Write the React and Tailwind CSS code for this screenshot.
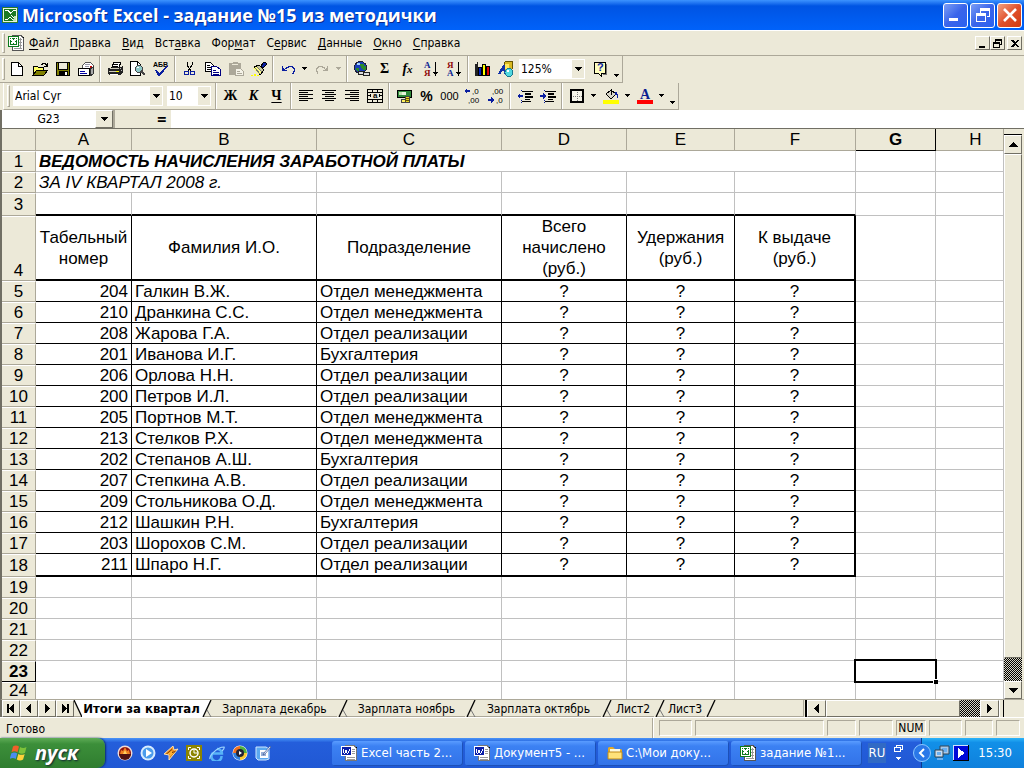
import { clsx } from 'clsx';

const rows = [
  ['204', 'Галкин В.Ж.', 'Отдел менеджмента'],
  ['210', 'Дранкина С.С.', 'Отдел менеджмента'],
  ['208', 'Жарова Г.А.', 'Отдел реализации'],
  ['201', 'Иванова И.Г.', 'Бухгалтерия'],
  ['206', 'Орлова Н.Н.', 'Отдел реализации'],
  ['200', 'Петров И.Л.', 'Отдел реализации'],
  ['205', 'Портнов М.Т.', 'Отдел менеджмента'],
  ['213', 'Стелков Р.Х.', 'Отдел менеджмента'],
  ['202', 'Степанов А.Ш.', 'Бухгалтерия'],
  ['207', 'Степкина А.В.', 'Отдел реализации'],
  ['209', 'Стольникова О.Д.', 'Отдел менеджмента'],
  ['212', 'Шашкин Р.Н.', 'Бухгалтерия'],
  ['203', 'Шорохов С.М.', 'Отдел реализации'],
  ['211', 'Шпаро Н.Г.', 'Отдел реализации'],
];

const menu = [
  ['', 'Ф', 'айл'],
  ['', 'П', 'равка'],
  ['', 'В', 'ид'],
  ['Вст', 'а', 'вка'],
  ['Фор', 'м', 'ат'],
  ['С', 'е', 'рвис'],
  ['', 'Д', 'анные'],
  ['', 'О', 'кно'],
  ['', 'С', 'правка'],
];

const raised = 'border border-t-white border-l-white border-r-[#716f64] border-b-[#716f64] bg-[#ece9d8]';

/* ---------- icons ---------- */

function Svg({ children, w = 16, h = 16, smooth = false, className }) {
  return (
    <svg
      width={w}
      height={h}
      viewBox={`0 0 ${w} ${h}`}
      shapeRendering={smooth ? 'auto' : 'crispEdges'}
      className={clsx('block shrink-0', className)}
      aria-hidden="true"
    >
      {children}
    </svg>
  );
}

const Down = ({ color = '#000', w = 7 }) => (
  <Svg w={w} h={4}>
    {w === 7 ? (
      <path d="M0 0h7v1H0zM1 1h5v1H1zM2 2h3v1H2zM3 3h1v1H3z" fill={color} />
    ) : (
      <path d="M0 0h5v1H0zM1 1h3v1H1zM2 2h1v1H2z" fill={color} />
    )}
  </Svg>
);

const ExcelMark = () => (
  <Svg>
    <rect width="16" height="16" fill="#2f7d2f" />
    <rect x="1" y="1" width="14" height="14" fill="#e8f5dc" />
    <rect x="2" y="2" width="12" height="12" fill="#1d7a24" />
    <path d="M3 3h4l2 3 2-3h3L10 8l4 5h-4l-2-3-2 3H3l4-5z" fill="#fff" />
    <path d="M4 4h2l6 8h-2zM11 4h2L6 12H4z" fill="#1d7a24" />
    <path d="M12 9h2v5h-3v-2h1z" fill="#bfe0b0" />
  </Svg>
);

const ExcelDoc = () => (
  <Svg w={17} h={17}>
    <path d="M7 1h7l2 2v13H5V1z" fill="#000" />
    <path d="M6 0h7l2 3v12H4V0z" fill="#fff" stroke="#555" />
    <path d="M11 4h3M11 7h3M11 10h3M6 13h8M12 3v10" stroke="#999" />
    <rect x="0" y="1" width="11" height="11" fill="#0c7a1c" />
    <rect x="1" y="2" width="9" height="9" fill="#fff" />
    <rect x="2" y="3" width="7" height="7" fill="#0c7a1c" />
    <path d="M3 4l5 5M8 4L3 9" stroke="#fff" strokeWidth="1.500" />
  </Svg>
);

const WordDoc = () => (
  <Svg w={17} h={17}>
    <path d="M7 1h7l2 2v13H5V1z" fill="#000" />
    <path d="M6 0h7l2 3v12H4V0z" fill="#fff" stroke="#777" />
    <path d="M11 4h3M11 6h3M11 8h3M6 12h8M6 14h8" stroke="#999" />
    <rect x="0" y="1" width="11" height="10" fill="#fff" />
    <rect x="1" y="2" width="9" height="8" fill="#0a1ea8" />
    <path d="M2 4l1 4h1l1-3 1 3h1l2-4" stroke="#fff" fill="none" />
  </Svg>
);

const NewIcon = () => (
  <Svg>
    <path d="M2.500 1.500h7l4 4v9h-11z" fill="#fff" stroke="#000" />
    <path d="M9.500 1.500v4h4" fill="none" stroke="#000" />
  </Svg>
);

const OpenIcon = () => (
  <Svg>
    <path d="M1 5h4l1 1h5v3H5l-4 5z" fill="#ffff66" stroke="#000" />
    <path d="M5 9h11l-4 5H1z" fill="#808000" stroke="#000" />
    <path d="M9 3h1V2h3v1h1v1h1M15 2v3h-3" fill="none" stroke="#000" />
  </Svg>
);

const SaveIcon = () => (
  <Svg>
    <rect x="1" y="1" width="14" height="14" fill="#000" />
    <rect x="2" y="2" width="12" height="12" fill="#808000" />
    <rect x="3" y="1" width="10" height="8" fill="#000" />
    <rect x="4" y="2" width="8" height="6" fill="#ece9d8" />
    <rect x="4" y="10" width="9" height="5" fill="#000" />
    <rect x="10" y="11" width="2" height="3" fill="#fff" />
  </Svg>
);

const MailIcon = () => (
  <Svg>
    <path d="M4.500 7V4.500l3-3h5l3 3V11.500h-6" fill="#fff" stroke="#555" />
    <path d="M7 3h5M7 5h4" stroke="#99a" />
    <rect x="12" y="5" width="2" height="2" fill="#c00" />
    <rect x="0.500" y="7.500" width="11" height="7" fill="#fff" stroke="#000" />
    <path d="M2 10h5M2 12h7" stroke="#0000a0" />
    <path d="M12 8l3-2v7l-3 2z" fill="#aaa" stroke="#333" />
  </Svg>
);

const PrintIcon = () => (
  <Svg>
    <path d="M5 6l2-5h7l-2 5z" fill="#fff" stroke="#000" />
    <path d="M7 3h4M6 5h5" stroke="#000" />
    <path d="M1 7h3l1-1h8l3-1v6l-3 3H2l-1-2z" fill="#222" />
    <path d="M3 7h9v1H3zM2 10h10v1H2z" fill="#d0cdbc" />
    <rect x="9" y="10" width="3" height="1" fill="#ff0" />
    <path d="M3 13h8v1H3z" fill="#fff" />
    <path d="M13 7h1v1h-1zM14 9h1v1h-1z" fill="#bbb" />
  </Svg>
);

const PreviewIcon = () => (
  <Svg>
    <path d="M0.500 0.500h7l3 3v11h-10z" fill="#fff" stroke="#000" />
    <path d="M7.500 1v3h3" fill="none" stroke="#000" />
    <circle cx="9" cy="8" r="3.500" fill="#8fc8c8" stroke="#444" />
    <path d="M11 10l4 4" stroke="#444" strokeWidth="2" />
    <path d="M7 6h2v1H7z" fill="#fff" />
  </Svg>
);

const SpellIcon = () => (
  <Svg>
    <text x="0" y="6" fontSize="7" fontWeight="700" fontFamily="Liberation Sans, sans-serif">АБВ</text>
    <path d="M2 9h2l2 3 7-7h2L7 15H5z" fill="#0a1ea0" />
  </Svg>
);

const CutIcon = () => (
  <Svg>
    <path d="M5 1v3l4 6M10 1v3l-4 6" stroke="#000" fill="none" />
    <circle cx="4.500" cy="12" r="2" fill="none" stroke="#0a1ea0" />
    <circle cx="10.500" cy="12" r="2" fill="none" stroke="#0a1ea0" />
  </Svg>
);

const CopyIcon = () => (
  <Svg>
    <path d="M0.500 1.500h5l3 3v6h-8z" fill="#fff" stroke="#000" />
    <path d="M2 4h3M2 6h4M2 8h4" stroke="#000" />
    <path d="M6.500 5.500h5l4 3v6h-9z" fill="#fff" stroke="#000080" />
    <path d="M8 9h3M8 11h6M8 13h6" stroke="#000080" />
  </Svg>
);

const PasteIcon = () => (
  <Svg>
    <path d="M1 2h3l1-1h4l1 1h3v12H1z" fill="#aca899" />
    <path d="M4 3h6v1H4z" fill="#ece9d8" />
    <path d="M7.500 7.500h5l3 3v4h-8z" fill="#f5f3e8" stroke="#aca899" />
    <path d="M9 10h3M9 12h5" stroke="#aca899" />
  </Svg>
);

const BrushIcon = () => (
  <Svg>
    <path d="M10 5l3-4 2 1v2l-3 3z" fill="#0a1ea0" stroke="#000" />
    <path d="M3 6l5-2 5 5-4 5z" fill="#c8c8a0" stroke="#000" />
    <path d="M2 7l3-1 5 5-2 3z" fill="#ffff80" />
    <path d="M4 7l5 6M6 6l5 5" stroke="#777" />
    <path d="M0 14h2v1H0zM3 13h2v2H3zM6 14h2v1H6z" fill="#ff0" />
  </Svg>
);

const Undo = ({ color }) => (
  <Svg>
    <path d="M2 5h1v2h1v1h1v1h2v1H2z" fill={color} />
    <path d="M5 7h1V6h2V5h4v1h1v1h1v3h-1v2h-1" fill="none" stroke={color} />
  </Svg>
);

const WebIcon = () => (
  <Svg>
    <circle cx="6.500" cy="6.500" r="6" fill="#1a3fb8" stroke="#223" />
    <path d="M6 3h4v2h2v4H9L7 7zM2 7h3v3H3z" fill="#2a8a2a" />
    <path d="M3 2h3v2H3z" fill="#a8d4ff" />
    <rect x="4.500" y="10.500" width="6" height="3" rx="1" fill="#ddd" stroke="#222" />
    <rect x="9.500" y="11.500" width="6" height="3" rx="1" fill="#ddd" stroke="#222" />
  </Svg>
);

const Sort = ({ top, bottom, topColor, bottomColor }) => (
  <Svg>
    <g fontSize="9" fontWeight="700" fontFamily="Liberation Serif, serif">
      <text x="1" y="7" fill={topColor}>{top}</text>
      <text x="1" y="15" fill={bottomColor}>{bottom}</text>
    </g>
    <path d="M12 1h1v10h2v1h-1v1h-1v2h-1v-2h-1v-1h-1v-1h2z" />
  </Svg>
);

const ChartIcon = () => (
  <Svg>
    <path d="M0 3h2V1h1v12h12v2H0z" fill="#222" />
    <path d="M3 6h3v8H3z" fill="#0020c0" stroke="#000" />
    <path d="M7 3h3v11H7z" fill="#ff0" stroke="#000" />
    <path d="M11 5h3v9h-3z" fill="#e00000" stroke="#000" />
  </Svg>
);

const DrawIcon = () => (
  <Svg>
    <path d="M6 2l2-2h6v8l-2 2H6z" fill="#d8b820" stroke="#665500" />
    <path d="M7 3h4v5H7z" fill="#ffe860" />
    <path d="M0 13L5 4h2l1 9H6v-3H4l-1 3z" fill="#1030a8" />
    <circle cx="11" cy="11.500" r="4" fill="#50d8e0" stroke="#187890" />
    <path d="M9 9h2v2H9z" fill="#fff" />
  </Svg>
);

const HelpIcon = () => (
  <Svg>
    <path d="M2 1h11v11H9v3l-3-3H2z" fill="#ffffc0" stroke="#000" />
    <text x="5" y="10" fontSize="11" fontWeight="700" fill="#0a1ea0" fontFamily="Liberation Sans, sans-serif">?</text>
    <path d="M14.500 3v10h-4" fill="none" stroke="#777" />
  </Svg>
);

const Align = ({ mode }) => (
  <Svg>
    {[0, 1, 2, 3, 4, 5].map((i) => {
      const w = i % 2 ? 9 : 14;
      const x = mode === 'left' ? 1 : mode === 'right' ? 15 - w : 8 - Math.floor(w / 2);
      return <rect key={i} x={x} y={2 + i * 2} width={w} height="1" />;
    })}
  </Svg>
);

const MergeIcon = () => (
  <Svg>
    <path d="M0.500 1.500h15v13h-15z" fill="none" stroke="#000" />
    <path d="M0 4h16v1H0zM0 11h16v1H0zM5 1h1v3H5zM10 1h1v3h-1zM5 12h1v3H5zM10 12h1v3h-1z" />
    <path d="M1 7h3v1H1zM12 7h3v1h-3zM3 6h1v3H3zM12 6h1v3h-1z" />
    <text x="6" y="10" fontSize="8" fontWeight="700" fontFamily="Liberation Sans, sans-serif">a</text>
  </Svg>
);

const MoneyIcon = () => (
  <Svg>
    <path d="M1 2h14v7H1z" fill="#2f8a3a" stroke="#000" />
    <path d="M3 4h3v3H3z" fill="#bfe0b0" />
    <circle cx="8" cy="5.500" r="2" fill="#e8f5dc" />
    <path d="M9 8h4v6H9z" fill="#e8d820" stroke="#444" />
    <path d="M5 11h4v3H5z" fill="#fff060" stroke="#444" />
    <path d="M9 10h4M9 12h4" stroke="#665500" />
  </Svg>
);

const Digits = ({ inc }) => (
  <Svg w={17} h={18}>
    <g fontSize="8" fontFamily="Liberation Sans, sans-serif">
      <text x={inc ? 8 : 5} y="7">{inc ? ',0' : ',00'}</text>
      <text x={inc ? 4 : 9} y="16">{inc ? ',00' : ',0'}</text>
    </g>
    {inc ? (
      <path d="M0 4l3-3v2h3v2H3v2z" fill="#0a1ea0" />
    ) : (
      <path d="M7 13l-3-3v2H1v2h3v2z" fill="#0a1ea0" />
    )}
  </Svg>
);

const Indent = ({ out }) => (
  <Svg>
    <path d="M5 3h11v1H5zM8 5h6v2H8zM8 8h8v2H8zM8 11h5v1H8zM5 13h9v1H5z" />
    {out ? (
      <path d="M0 8l3-3v2h3v2H3v2z" fill="#0a1ea0" />
    ) : (
      <path d="M6 8L3 5v2H0v2h3v2z" fill="#0a1ea0" />
    )}
    <path d="M4 2v2M4 12v3" stroke="#0a1ea0" strokeDasharray="1 1" />
  </Svg>
);

const BorderIcon = () => (
  <Svg>
    <rect x="2" y="2" width="12" height="12" fill="#f5f3e8" stroke="#000" strokeWidth="2" />
    <path d="M8.500 4v9M4 8.500h9" stroke="#777" strokeDasharray="1 1" />
  </Svg>
);

const FillIcon = () => (
  <Svg>
    <path d="M3 6l5-4 5 4-5 5z" fill="#d8d6c8" stroke="#000" />
    <path d="M8 1v6" stroke="#000" />
    <path d="M12 4h2v2h1v4h-1V7h-2z" fill="#0a1ea0" />
    <rect y="12" width="16" height="4" fill="#ff0" />
  </Svg>
);

const FontColorIcon = () => (
  <Svg h={20}>
    <text x="3" y="13" fontSize="14" fontWeight="700" fill="#0a1e90" fontFamily="Liberation Serif, serif">A</text>
    <rect y="14" width="16" height="4" fill="#f00" />
  </Svg>
);

const WindowsFlag = () => (
  <Svg w={18} h={18} smooth>
    <path d="M3 2.500c2-1.400 4-1.200 6 0L7.500 8.200c-2-1.200-4-1.300-6 0z" fill="#f0602a" />
    <path d="M10 3c2 1.200 4.300 1.300 6.500 0L15 8.800c-2.200 1.300-4.300 1.100-6.400 0z" fill="#7dc23a" />
    <path d="M1.200 9.400c2-1.300 4-1.200 6 0L5.700 15c-2-1.200-4-1.200-6 0z" fill="#4a8cf0" />
    <path d="M8.300 9.900c2 1.200 4.200 1.300 6.400 0l-1.600 5.700c-2.100 1.200-4.200 1.200-6.300 0z" fill="#ffd23a" />
  </Svg>
);

const quickIcons = [
  {
    label: 'Nero',
    art: (
      <>
        <circle cx="8" cy="8" r="7.500" fill="#f0dcd8" />
        <circle cx="8" cy="8" r="6" fill="#8c1010" />
        <path d="M3 9l1-4 2 1 2-4 2 4 2-1 1 4z" fill="#f08020" />
        <path d="M6 9l2-4 2 4z" fill="#ffd060" />
        <path d="M2 9h12a6 6 0 01-12 0z" fill="#501010" />
      </>
    ),
  },
  {
    label: 'Media',
    art: (
      <>
        <circle cx="8" cy="8" r="7.500" fill="#d8ecff" />
        <circle cx="8" cy="8" r="5.500" fill="#4a9cec" />
        <path d="M6 4l6 4-6 4z" fill="#fff" />
      </>
    ),
  },
  {
    label: 'Winamp',
    art: (
      <>
        <path d="M1 9l9-8 1 4 4-1-9 11v-5z" fill="#f09020" stroke="#fbe0b0" />
        <path d="M3 9l6-5v3l4-1-6 6V9z" fill="#703000" />
        <path d="M4 9l5-4v3l3-1-5 5V9z" fill="#ffb030" />
      </>
    ),
  },
  {
    label: 'Outlook',
    art: (
      <>
        <rect width="16" height="16" fill="#8c8400" />
        <path d="M5 2.500H2.500V5M11 2.500h2.500V5M5 13.500H2.500V11M11 13.500h2.500V11" fill="none" stroke="#fff" />
        <circle cx="8" cy="8" r="4" fill="#8c8400" stroke="#fff" strokeWidth="1.500" />
        <path d="M8 5v3h3" fill="none" stroke="#fff" />
      </>
    ),
  },
  {
    label: 'Internet Explorer',
    art: (
      <>
        <path d="M12.500 11A5 5 0 113.500 8.500H13A4.700 4.700 0 008 4" fill="none" stroke="#58b4f8" strokeWidth="2.500" />
        <path d="M1 14C0 11 8 2 15 2c1 1-1 3-2 4" fill="none" stroke="#9cd4ff" strokeWidth="1.200" />
      </>
    ),
  },
  {
    label: 'Media Player',
    art: (
      <>
        <circle cx="8" cy="8" r="7.500" fill="#fff" />
        <path d="M8 1a7 7 0 00-7 7h4l3-3z" fill="#f07020" />
        <path d="M8 1a7 7 0 017 7h-4L8 5z" fill="#50b040" />
        <path d="M1 8a7 7 0 007 7v-3L5 8z" fill="#3080e0" />
        <path d="M15 8a7 7 0 01-7 7v-3l3-4z" fill="#f8c830" />
        <circle cx="8" cy="8" r="4" fill="#223" />
        <path d="M7 6l3 2-3 2z" fill="#fff" />
      </>
    ),
  },
  {
    label: 'Рабочий стол',
    art: (
      <>
        <path d="M1 2h10l3 2v10l-3 1H3l-2-2z" fill="#5aa8f0" stroke="#cfe6ff" />
        <path d="M5 5h8v8H5z" fill="#fff" />
        <path d="M6 8h4M6 10h5" stroke="#3060b0" />
        <path d="M15 1L9 8l-1 2 2-1 6-7z" fill="#f8f8ff" stroke="#305090" strokeWidth=".7" />
      </>
    ),
  },
];

const FolderIcon = () => (
  <Svg smooth>
    <path d="M1 3l1-1h4l2 2h6l1 1v9H1z" fill="#e0a828" />
    <path d="M3 4h10v3H3z" fill="#fffbe0" />
    <path d="M1 7h14v7H1z" fill="#ffe27a" stroke="#c08a18" />
  </Svg>
);

/* ---------- small controls ---------- */

const Sep = () => (
  <span className="flex w-[6px] shrink-0 justify-center self-stretch">
    <span className="h-full border-r border-l border-r-white border-l-[#aca899]" />
  </span>
);

const Grip = () => (
  <span className="my-[2px] w-[3px] shrink-0 self-stretch border border-t-white border-r-[#aca899] border-b-[#aca899] border-l-white" />
);

const Tool = ({ label, children }) => (
  <button type="button" aria-label={label} className="flex h-6 w-[23px] shrink-0 items-center justify-center">
    {children}
  </button>
);

const Drop = ({ label, color, low, w = 7 }) => (
  <button
    type="button"
    aria-label={label}
    className={clsx('flex h-6 w-[11px] shrink-0 justify-center', low ? 'items-end pb-[3px]' : 'items-center')}
  >
    <Down color={color} w={w} />
  </button>
);

const Combo = ({ label, value, className }) => (
  <span className={clsx('relative block h-5 shrink-0 bg-white', className)}>
    <select
      aria-label={label}
      defaultValue={value}
      className="block h-full w-full appearance-none bg-transparent pl-[2px] text-xs leading-4 outline-none"
    >
      <option>{value}</option>
    </select>
    <span className="pointer-events-none absolute inset-y-px right-px flex w-3 items-center justify-center bg-[#ece9d8]">
      <Down />
    </span>
  </span>
);

/* ---------- window chrome ---------- */

function TitleBar() {
  const btn = 'flex h-[25px] w-[25px] items-center justify-center rounded-[3px] border border-white';
  const blue = 'bg-linear-to-br from-[#7d9df5] via-[#3a64ea] to-[#2a62f0]';
  return (
    <header className="flex h-[30px] items-center gap-1 bg-linear-to-b from-[#3c93ff] via-[#0054e3] via-20% to-[#0062fa] pr-[2px] pl-[2px]">
      <ExcelMark />
      <h1 className="grow font-['Open_Sans','Noto_Sans',sans-serif] text-lg leading-[30px] font-bold whitespace-nowrap text-white [text-shadow:1px_1px_#0a2a90]">
        Microsoft Excel - задание №15 из методички
      </h1>
      <div className="flex gap-[2px]">
        <button type="button" aria-label="Свернуть" className={clsx(btn, blue)}>
          <Svg><path d="M1 11h9v3H1z" fill="#fff" /></Svg>
        </button>
        <button type="button" aria-label="Восстановить" className={clsx(btn, blue)}>
          <Svg>
            <path d="M5 1h10v9h-3V9h2V4H6v2H5z" fill="#fff" />
            <path d="M1 6h10v9H1zM2 9v5h8V9z" fill="#fff" fillRule="evenodd" />
          </Svg>
        </button>
        <button type="button" aria-label="Закрыть" className={clsx(btn, 'bg-linear-to-br from-[#f0a080] via-[#e0502a] to-[#d03a10]')}>
          <Svg smooth><path d="M2 2l12 12M14 2L2 14" stroke="#fff" strokeWidth="2.600" /></Svg>
        </button>
      </div>
    </header>
  );
}

function MenuBar() {
  const btn = clsx('flex h-[14px] w-[15px] items-center justify-center', raised);
  return (
    <nav className="flex h-[26px] items-center border-t border-b border-t-white border-b-[#aca899] pr-[2px] pl-[2px]">
      <Grip />
      <span className="ml-[3px]"><ExcelDoc /></span>
      <div className="flex grow gap-[11px] pl-1 text-xs">
        {menu.map(([a, key, b]) => (
          <button type="button" key={a + key + b} className="whitespace-nowrap">
            {a}<span className="underline underline-offset-2">{key}</span>{b}
          </button>
        ))}
      </div>
      <button type="button" aria-label="Свернуть книгу" className={btn}>
        <Svg w={9} h={9}><path d="M1 7h6v2H1z" /></Svg>
      </button>
      <button type="button" aria-label="Восстановить книгу" className={btn}>
        <Svg w={9} h={9}>
          <path d="M2 0h7v6H7V5h1V2H3v1H2z" />
          <path d="M0 3h7v6H0zM1 5v3h5V5z" fillRule="evenodd" />
        </Svg>
      </button>
      <button type="button" aria-label="Закрыть книгу" className={clsx(btn, 'ml-[2px]')}>
        <Svg w={8} h={7}><path d="M0 0h2l2 2 2-2h2L5 3.500 8 7H6L4 5 2 7H0l3-3.500z" /></Svg>
      </button>
    </nav>
  );
}

function StandardBar() {
  return (
    <div role="toolbar" aria-label="Стандартная" className="flex h-[27px] w-fit items-center border-r border-b border-[#aca899] pl-[2px]">
      <Grip />
      <Tool label="Создать"><NewIcon /></Tool>
      <Tool label="Открыть"><OpenIcon /></Tool>
      <Tool label="Сохранить"><SaveIcon /></Tool>
      <Tool label="Сообщение"><MailIcon /></Tool>
      <Sep />
      <Tool label="Печать"><PrintIcon /></Tool>
      <Tool label="Просмотр"><PreviewIcon /></Tool>
      <Tool label="Орфография"><SpellIcon /></Tool>
      <Sep />
      <Tool label="Вырезать"><CutIcon /></Tool>
      <Tool label="Копировать"><CopyIcon /></Tool>
      <Tool label="Вставить"><PasteIcon /></Tool>
      <Tool label="Формат по образцу"><BrushIcon /></Tool>
      <Sep />
      <Tool label="Отменить"><Undo color="#0a1ea0" /></Tool>
      <Drop label="Список отмены" w={5} />
      <Tool label="Вернуть"><span className="-scale-x-100"><Undo color="#aca899" /></span></Tool>
      <Drop label="Список возврата" color="#aca899" w={5} />
      <Sep />
      <Tool label="Гиперссылка"><WebIcon /></Tool>
      <Tool label="Автосумма"><span className="font-['Liberation_Serif',serif] text-sm leading-4 font-bold">Σ</span></Tool>
      <Tool label="Функция"><span className="font-['Liberation_Serif',serif] text-sm leading-4 font-bold italic">f<span className="text-[11px]">x</span></span></Tool>
      <Tool label="По возрастанию"><Sort top="А" bottom="Я" topColor="#0a1e90" bottomColor="#900a0a" /></Tool>
      <Tool label="По убыванию"><Sort top="Я" bottom="А" topColor="#900a0a" bottomColor="#0a1e90" /></Tool>
      <Sep />
      <Tool label="Диаграмма"><ChartIcon /></Tool>
      <Tool label="Рисование"><DrawIcon /></Tool>
      <Combo label="Масштаб" value="125%" className="mr-[3px] ml-[2px] w-[66px]" />
      <Tool label="Справка"><HelpIcon /></Tool>
      <Drop label="Другие кнопки" low w={5} />
    </div>
  );
}

function FormatBar() {
  const letter = "font-['Liberation_Serif',serif] text-sm leading-4 font-bold";
  return (
    <div role="toolbar" aria-label="Форматирование" className="ml-[3px] flex h-[27px] w-fit items-center border-r border-b border-l border-[#aca899] border-l-white pl-[3px]">
      <Grip />
      <Combo label="Шрифт" value="Arial Cyr" className="ml-[3px] w-[150px]" />
      <Combo label="Размер" value="10" className="mr-[2px] ml-1 w-[44px]" />
      <Sep />
      <Tool label="Полужирный"><span className={letter}>Ж</span></Tool>
      <Tool label="Курсив"><span className={clsx(letter, 'italic')}>К</span></Tool>
      <Tool label="Подчеркнутый"><span className={clsx(letter, 'underline underline-offset-2')}>Ч</span></Tool>
      <Sep />
      <Tool label="По левому краю"><Align mode="left" /></Tool>
      <Tool label="По центру"><Align mode="center" /></Tool>
      <Tool label="По правому краю"><Align mode="right" /></Tool>
      <Tool label="Объединить"><MergeIcon /></Tool>
      <Sep />
      <Tool label="Денежный формат"><MoneyIcon /></Tool>
      <Tool label="Процентный формат"><span className="font-['Liberation_Sans',sans-serif] text-sm font-bold">%</span></Tool>
      <Tool label="Формат с разделителями"><span className="font-['Liberation_Sans_Narrow','Liberation_Sans',sans-serif] text-[11px]">000</span></Tool>
      <Tool label="Увеличить разрядность"><Digits inc /></Tool>
      <Tool label="Уменьшить разрядность"><Digits /></Tool>
      <Sep />
      <Tool label="Уменьшить отступ"><Indent out /></Tool>
      <Tool label="Увеличить отступ"><Indent /></Tool>
      <Sep />
      <Tool label="Границы"><BorderIcon /></Tool>
      <Drop label="Вид границ" w={5} />
      <Tool label="Цвет заливки"><FillIcon /></Tool>
      <Drop label="Цвета заливки" w={5} />
      <Tool label="Цвет шрифта"><FontColorIcon /></Tool>
      <Drop label="Цвета шрифта" w={5} />
      <Drop label="Другие кнопки" low w={5} />
    </div>
  );
}

function FormulaBar() {
  return (
    <div className="flex h-[18px] border-l-2 border-[#716f64] bg-white">
      <input aria-label="Имя ячейки" defaultValue="G23" className="w-[93px] text-center text-xs outline-none" />
      <button type="button" aria-label="Список имен" className={clsx('flex w-[18px] items-center justify-center', raised)}>
        <Down />
      </button>
      <button type="button" aria-label="Изменить формулу" className="w-[58px] border-l-2 border-l-[#aca899] bg-[#ece9d8] pr-1 text-right text-sm leading-4 font-bold">
        =
      </button>
      <input aria-label="Строка формул" className="min-w-0 grow px-1 text-xs outline-none" />
    </div>
  );
}

/* ---------- sheet ---------- */

const grid = 'border-r border-b border-[#c0c0c0]';

function RowHead({ n, active, bottom }) {
  return (
    <th
      scope="row"
      className={clsx(
        'border-t border-r border-b border-t-white bg-[#ece9d8] p-0',
        active ? 'border-r-black border-b-black font-bold' : 'border-r-[#aca899] border-b-[#aca899] font-normal',
        bottom ? 'align-bottom' : 'align-middle',
      )}
    >
      {n}
    </th>
  );
}

function Blank({ count }) {
  return Array.from({ length: count }, (_, i) => <td key={i} className={grid} />);
}

function Sheet() {
  const th = 'border-r border-b-2 border-black p-0 text-center font-normal align-middle leading-[21px]';
  return (
    <table className="w-full table-fixed border-separate border-spacing-0 bg-white font-['Liberation_Sans',Arial,sans-serif] text-[17px] leading-[19px] text-black">
      <colgroup>
        <col className="w-[34px]" />
        <col className="w-[96px]" />
        <col className="w-[185px]" />
        <col className="w-[185px]" />
        <col className="w-[125px]" />
        <col className="w-[108px]" />
        <col className="w-[121px]" />
        <col className="w-[80px]" />
        <col />
      </colgroup>
      <thead>
        <tr className="h-[22px]">
          <td className="border-r border-b border-[#aca899] bg-[#ece9d8]" />
          {['A', 'B', 'C', 'D', 'E', 'F', 'G', 'H'].map((c) => (
            <th
              key={c}
              scope="col"
              className={clsx(
                'border-r border-b bg-[#ece9d8] p-0',
                c === 'G' ? 'border-black font-bold' : 'border-[#aca899] font-normal',
                c === 'H' && 'pl-3',
              )}
            >
              {c}
            </th>
          ))}
        </tr>
      </thead>
      <tbody>
        <tr className="h-[21px]">
          <RowHead n={1} />
          <td colSpan={6} className={clsx(grid, 'px-[3px] py-0 font-bold whitespace-nowrap italic')}>
            ВЕДОМОСТЬ НАЧИСЛЕНИЯ ЗАРАБОТНОЙ ПЛАТЫ
          </td>
          <Blank count={2} />
        </tr>
        <tr className="h-[21px]">
          <RowHead n={2} />
          <td colSpan={2} className={clsx(grid, 'px-[3px] py-0 whitespace-nowrap italic')}>ЗА IV КВАРТАЛ 2008 г.</td>
          <Blank count={6} />
        </tr>
        <tr className="h-[23px]">
          <RowHead n={3} />
          {[0, 1, 2, 3, 4, 5].map((i) => (
            <td key={i} className="border-r border-b-2 border-r-[#c0c0c0] border-b-black" />
          ))}
          <Blank count={2} />
        </tr>
        <tr className="h-[65px]">
          <RowHead n={4} bottom />
          <td className={th}>Табельный<br />номер</td>
          <td className={th}>Фамилия И.О.</td>
          <td className={th}>Подразделение</td>
          <td className={th}>Всего<br />начислено<br />(руб.)</td>
          <td className={th}>Удержания<br />(руб.)</td>
          <td className={clsx(th, 'border-r-2')}>К выдаче<br />(руб.)</td>
          <Blank count={2} />
        </tr>
        {rows.map(([id, name, dept], i) => {
          const last = i === rows.length - 1;
          const cell = clsx('border-r border-black py-0 whitespace-nowrap', last ? 'border-b-2' : 'border-b');
          return (
            <tr key={id} className={last ? 'h-[23px]' : 'h-[21px]'}>
              <RowHead n={i + 5} />
              <td className={clsx(cell, 'px-[3px] text-right')}>{id}</td>
              <td className={clsx(cell, 'px-[3px]')}>{name}</td>
              <td className={clsx(cell, 'px-[3px]')}>{dept}</td>
              <td className={clsx(cell, 'text-center')}>?</td>
              <td className={clsx(cell, 'text-center')}>?</td>
              <td className={clsx(cell, 'border-r-2 text-center')}>?</td>
              <Blank count={2} />
            </tr>
          );
        })}
        {[19, 20, 21, 22].map((n) => (
          <tr key={n} className="h-[21px]">
            <RowHead n={n} />
            <Blank count={8} />
          </tr>
        ))}
        <tr className="h-[21px]">
          <RowHead n={23} active />
          <Blank count={6} />
          <td className={clsx(grid, 'relative')}>
            <span className="absolute -top-[2px] -right-[2px] -bottom-[2px] -left-[2px] border-2 border-black" />
            <span className="absolute -right-[3px] -bottom-[3px] h-[5px] w-[5px] border-t border-l border-white bg-black" />
          </td>
          <Blank count={1} />
        </tr>
        <tr className="h-[17px]">
          <th scope="row" className="border-t border-r border-t-white border-r-[#aca899] bg-[#ece9d8] p-0 leading-4 font-normal">
            24
          </th>
          {[0, 1, 2, 3, 4, 5, 6, 7].map((i) => (
            <td key={i} className="border-r border-[#c0c0c0]" />
          ))}
        </tr>
      </tbody>
    </table>
  );
}

const hatch = 'bg-[repeating-conic-gradient(#000_0_25%,#d8d5c4_0_50%)] bg-size-[2px_2px]';

function VerticalScroll() {
  return (
    <div className="flex w-[18px] shrink-0 flex-col bg-[#ece9d8]">
      <span className="h-[6px] border-b border-black" />
      <button type="button" aria-label="Вверх" className={clsx('flex h-[19px] items-center justify-center', raised)}>
        <Svg w={9} h={5}><path d="M4 0h1v1H4zM3 1h3v1H3zM2 2h5v1H2zM1 3h7v1H1zM0 4h9v1H0z" /></Svg>
      </button>
      <span className={clsx('grow', raised)} />
      <span className={clsx('h-[23px]', hatch)} />
      <button type="button" aria-label="Вниз" className={clsx('flex h-[18px] items-center justify-center', raised)}>
        <Svg w={9} h={5}><path d="M0 0h9v1H0zM1 1h7v1H1zM2 2h5v1H2zM3 3h3v1H3zM4 4h1v1H4z" /></Svg>
      </button>
    </div>
  );
}

const Slash = ({ active, after }) => (
  <Svg w={11} h={17} smooth>
    <path d="M0 0h10L2 17H0z" fill={active ? '#fff' : '#ece9d8'} />
    <path d="M10 0L2 17" stroke="#000" strokeWidth="1.300" />
    {after && <path d="M6 10l4 7" stroke="#777" />}
  </Svg>
);

function SheetTabs() {
  const nav = [
    ['Первый лист', 'M0 0h2v9H0zM7 0v9L2 4.500z'],
    ['Предыдущий лист', 'M6 0v9L1 4.500z'],
    ['Следующий лист', 'M2 0v9l5-4.500z'],
    ['Последний лист', 'M6 0h2v9H6zM1 0v9l5-4.500z'],
  ];
  const tabs = [
    ['Зарплата декабрь', 'w-[125px]'],
    ['Зарплата ноябрь', 'w-[117px]'],
    ['Зарплата октябрь', 'w-[125px]'],
    ['Лист2', 'w-[42px]'],
    ['Лист3', 'w-[40px]'],
  ];
  return (
    <div className="flex h-[18px] border-t border-l-2 border-t-[#aca899] border-l-[#716f64] bg-[#ece9d8] pr-[2px] text-xs">
      {nav.map(([label, d]) => (
        <button key={label} type="button" aria-label={label} className={clsx('flex h-[17px] w-[18px] shrink-0 items-center justify-center', raised)}>
          <Svg w={8} h={9}><path d={d} /></Svg>
        </button>
      ))}
      <div className="flex grow border-b border-[#aca899]">
        <Svg w={8} h={17} smooth>
          <path d="M0 0h8v17z" fill="#fff" />
          <path d="M0 0l8 17" stroke="#000" strokeWidth="1.300" />
        </Svg>
        <button type="button" className="h-[17px] w-[119px] shrink-0 bg-white text-[13px] leading-[17px] font-bold whitespace-nowrap">
          Итоги за квартал
        </button>
        <Slash active after />
        {tabs.map(([t, w], i) => (
          <span key={t} className="flex">
            <button type="button" className={clsx('h-[17px] shrink-0 whitespace-nowrap', w)}>{t}</button>
            <Slash after={i < tabs.length - 1} />
          </span>
        ))}
      </div>
      <span className="ml-auto w-1 border-r-2 border-l border-r-black border-l-[#aca899]" />
      <button type="button" aria-label="Влево" className={clsx('flex h-[17px] w-[19px] shrink-0 items-center justify-center', raised)}>
        <Svg w={5} h={9}><path d="M5 0v9L0 4.500z" /></Svg>
      </button>
      <span className={clsx('w-[134px] shrink-0', raised)} />
      <span className={clsx('w-5 shrink-0', hatch)} />
      <button type="button" aria-label="Вправо" className={clsx('flex h-[17px] w-[19px] shrink-0 items-center justify-center', raised)}>
        <Svg w={5} h={9}><path d="M0 0v9l5-4.500z" /></Svg>
      </button>
      <span className="w-[5px] border-r border-l border-r-black border-l-white" />
      <span className="w-[18px] shrink-0" />
    </div>
  );
}

function StatusBar() {
  const box = 'h-[16px] shrink-0 border border-t-[#aca899] border-l-[#aca899] border-r-white border-b-white';
  return (
    <div className="flex h-[21px] items-center gap-[3px] border-t border-white pr-1 text-xs">
      <span className="grow pt-[2px] pl-[6px]">Готово</span>
      <span className="mr-[2px] h-full w-[2px] border-r border-l border-r-white border-l-[#aca899]" />
      <span className={clsx(box, 'w-[33px]')} />
      <span className={clsx(box, 'w-[129px]')} />
      <span className={clsx(box, 'w-[29px]')} />
      <span className={clsx(box, 'w-[34px]')} />
      <span className={clsx(box, 'w-[30px] text-center leading-[15px]')}>NUM</span>
      <span className={clsx(box, 'w-[33px]')} />
      <span className={clsx(box, 'w-[28px]')} />
      <span className={clsx(box, 'w-[24px]')} />
    </div>
  );
}

function Taskbar() {
  const tasks = [
    [<WordDoc />, 'Excel часть 2...'],
    [<WordDoc />, 'Документ5 - ...'],
    [<FolderIcon />, 'C:\\Мои доку...'],
    [<ExcelDoc />, 'задание №1...'],
  ];
  return (
    <footer className="flex h-[30px] items-center bg-linear-to-b from-[#4a94f8] via-[#245edb] via-15% to-[#2058d4] text-[13px] text-white">
      <button
        type="button"
        className="flex h-full w-[105px] shrink-0 items-center gap-[7px] rounded-r-lg bg-linear-to-b from-[#5eac56] via-[#3c8f3a] via-20% to-[#2f7d2f] pl-[10px] shadow-[1px_0_2px_#0a2a70]"
      >
        <WindowsFlag />
        <span className="font-['Open_Sans','Noto_Sans',sans-serif] text-xl leading-6 font-bold italic [text-shadow:1px_1px_2px_#123]">пуск</span>
      </button>
      <div className="flex shrink-0 gap-[7px] pl-3">
        {quickIcons.map((q) => (
          <button key={q.label} type="button" aria-label={q.label}><Svg smooth>{q.art}</Svg></button>
        ))}
      </div>
      <div className="ml-[61px] flex grow gap-[2px]">
        {tasks.map(([icon, text]) => (
          <button
            key={text}
            type="button"
            className="flex h-[25px] w-[131px] items-center gap-[3px] rounded-[3px] bg-linear-to-b from-[#5a9cff] via-[#3c81f3] via-20% to-[#3272e8] pl-[9px] whitespace-nowrap shadow-[inset_-1px_-1px_#1c50b8]"
          >
            {icon}
            <span>{text}</span>
          </button>
        ))}
      </div>
      <button type="button" className="mr-2 bg-[#316ac5] px-px">RU</button>
      <span className="mr-[18px]">
        <Svg w={9} h={16}>
          <path d="M2.500 2V0.500h6v4H7M0.500 2.500h6v4h-6z" fill="none" stroke="#fff" />
          <path d="M2 12h5v1H6v1H5v1H4v-1H3v-1H2z" fill="#fff" />
        </Svg>
      </span>
      <div className="flex h-full items-center gap-[3px] border-l border-[#0a3a90] bg-linear-to-b from-[#2cb4f8] via-[#1290e8] via-15% to-[#0f80dc] pr-3">
        <button type="button" aria-label="Скрыть значки" className="-ml-[9px] flex h-[18px] w-[18px] items-center justify-center rounded-full border border-[#8cc8ff] bg-[#2a78e8]">
          <Svg w={8} h={10} smooth><path d="M6 1L2 5l4 4" stroke="#fff" strokeWidth="2" fill="none" /></Svg>
        </button>
        <Svg smooth>
          <path d="M6 1h9v8H6z" fill="#a8c8e8" stroke="#345" />
          <path d="M8 3h5v4H8z" fill="#6ab0f0" />
          <path d="M1 5h8v7H1z" fill="#c8dcf0" stroke="#345" />
          <path d="M3 7h4v3H3zM3 13h6v2H3z" fill="#6ab0f0" />
        </Svg>
        <Svg>
          <rect width="16" height="16" fill="#000" />
          <rect x="0" y="0" width="15" height="15" fill="#cfe0ff" />
          <rect x="1" y="1" width="14" height="14" fill="#0008d8" />
          <path d="M5 3l7 5-7 5z" fill="#fff" />
        </Svg>
        <time className="ml-[6px]">15:30</time>
      </div>
    </footer>
  );
}

export default function App() {
  return (
    <div className="flex min-h-screen flex-col bg-[#ece9d8] font-['DejaVu_Sans_Condensed','DejaVu_Sans',sans-serif] text-black">
      <TitleBar />
      <MenuBar />
      <StandardBar />
      <FormatBar />
      <FormulaBar />
      <main className="flex border-t border-l-2 border-[#716f64] pr-[2px]">
        <div className="min-w-0 grow">
          <Sheet />
        </div>
        <VerticalScroll />
      </main>
      <SheetTabs />
      <StatusBar />
      <Taskbar />
    </div>
  );
}
